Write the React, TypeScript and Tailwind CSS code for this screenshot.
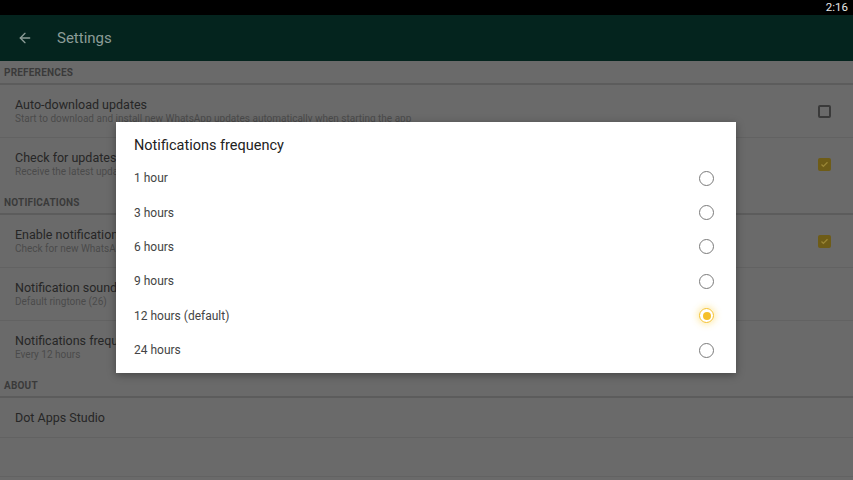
import { ArrowLeft } from "lucide-react"

type Pref = { title: string; summary?: string; check?: "on" | "off" }

const sections: { header: string; items: Pref[] }[] = [
  {
    header: "PREFERENCES",
    items: [
      {
        title: "Auto-download updates",
        summary: "Start to download and install new WhatsApp updates automatically when starting the app",
        check: "off",
      },
      { title: "Check for updates", summary: "Receive the latest updates for WhatsApp", check: "on" },
    ],
  },
  {
    header: "NOTIFICATIONS",
    items: [
      { title: "Enable notifications", summary: "Check for new WhatsApp updates in background", check: "on" },
      { title: "Notification sound", summary: "Default ringtone (26)" },
      { title: "Notifications frequency", summary: "Every 12 hours" },
    ],
  },
  {
    header: "ABOUT",
    items: [{ title: "Dot Apps Studio" }],
  },
]

const options = ["1 hour", "3 hours", "6 hours", "9 hours", "12 hours (default)", "24 hours"]
const selected = 4

const Checkbox = ({ on }: { on: boolean }) =>
  on ? (
    <div className="flex h-[13px] w-[13px] items-center justify-center rounded-[2px] bg-[#6e5c17]">
      <svg width="9" height="9" viewBox="0 0 24 24" fill="none" stroke="#9a8636" strokeWidth="3.5">
        <path d="M4 12l5 5L20 6" />
      </svg>
    </div>
  ) : (
    <div className="h-[13px] w-[13px] rounded-[2px] border-2 border-[#3a3a3a]" />
  )

const Radio = ({ on }: { on: boolean }) =>
  on ? (
    <div className="flex h-[15px] w-[15px] items-center justify-center rounded-full border-[1.5px] border-[#f5c02a] shadow-[0_0_6px_2px_rgba(250,215,90,0.45)]">
      <div className="h-[8px] w-[8px] rounded-full bg-[#f5c02a]" />
    </div>
  ) : (
    <div className="h-[15px] w-[15px] rounded-full border-[1.5px] border-[#7a7a7a]" />
  )

export default function App() {
  return (
    <div
      className="relative flex h-[480px] w-[853px] flex-col overflow-hidden bg-[#6a6a6a]"
      style={{ fontFamily: "Roboto, 'Liberation Sans', sans-serif" }}
    >
      {/* Status bar */}
      <div className="flex h-[15px] items-center justify-end bg-black pr-[5px] text-[11.5px] text-[#e8e8e8]">
        2:16
      </div>

      {/* Toolbar */}
      <div className="flex h-[46px] items-center bg-[#04241e] pl-[17px]">
        <ArrowLeft size={16} strokeWidth={2} className="text-[#8c9c97]" />
        <span className="ml-[24px] text-[15px] text-[#8c9c97]">Settings</span>
      </div>

      {/* Preference list */}
      <div className="flex flex-col">
        {sections.map((s) => (
          <div key={s.header} className="flex flex-col">
            <div className="flex h-[24px] items-center border-b-2 border-[#5c5c5c] pl-[4px] text-[10px] font-bold tracking-[0.2px] text-[#3a3a3a]">
              {s.header}
            </div>
            {s.items.map((it, i) => (
              <div
                key={it.title}
                className={
                  "flex items-center justify-between border-[#626262] pl-[15px] pr-[22px] " +
                  (it.summary ? "h-[53px] " : "h-[40px] ") +
                  (i < s.items.length - 1 || s.header === "ABOUT" ? "border-b" : "")
                }
              >
                <div className="flex min-w-0 flex-col">
                  <span className="text-[12.5px] leading-[15px] text-[#262626]">{it.title}</span>
                  {it.summary && (
                    <span className="whitespace-nowrap text-[10px] leading-[14px] text-[#4a4a4a]">{it.summary}</span>
                  )}
                </div>
                {it.check && <Checkbox on={it.check === "on"} />}
              </div>
            ))}
          </div>
        ))}
        <div className="h-[39px] border-b border-[#626262]" />
      </div>

      {/* Dialog */}
      <div className="absolute left-[116px] top-[122px] flex h-[251px] w-[620px] flex-col bg-white pl-[18px] pr-[22px] shadow-[0_2px_8px_rgba(0,0,0,0.35)]">
        <div className="flex h-[39px] items-center pt-[8px] text-[14.5px] text-[#222]">Notifications frequency</div>
        {options.map((o, i) => (
          <div key={o} className="flex h-[34.4px] items-center justify-between">
            <span className="text-[12px] text-[#444]">{o}</span>
            <Radio on={i === selected} />
          </div>
        ))}
      </div>
    </div>
  )
}
